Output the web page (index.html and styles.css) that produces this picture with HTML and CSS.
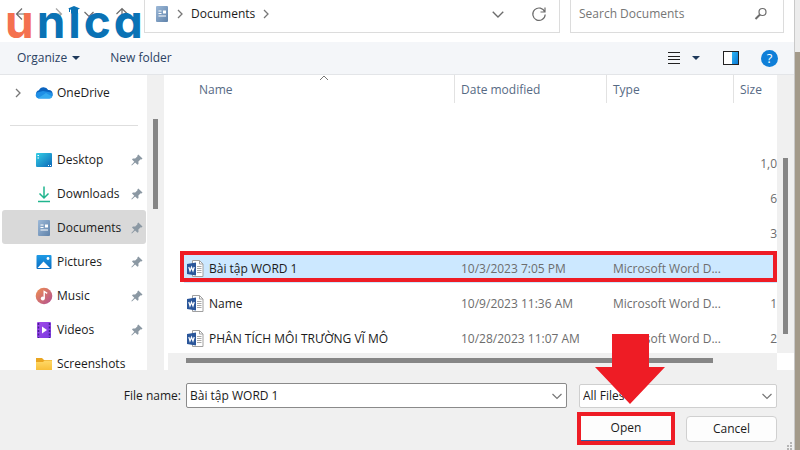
FILE: index.html
```html
<!DOCTYPE html>
<html lang="vi">
<head>
<meta charset="utf-8">
<title>Open</title>
<link rel="stylesheet" href="styles.css">
</head>
<body>

<!-- shared icons -->
<svg class="defs" width="0" height="0" aria-hidden="true">
	<defs>
		<linearGradient id="gDoc" x1="0" y1="0" x2="1" y2="1"><stop offset="0" stop-color="#9db9d8"/><stop offset="1" stop-color="#5f82aa"/></linearGradient>
		<linearGradient id="gDesk" x1="0" y1="0" x2="1" y2="1"><stop offset="0" stop-color="#35cfe6"/><stop offset="1" stop-color="#0b67b8"/></linearGradient>
		<linearGradient id="gPic" x1="0" y1="0" x2="0" y2="1"><stop offset="0" stop-color="#1f9be6"/><stop offset="1" stop-color="#0a6cc0"/></linearGradient>
		<linearGradient id="gMusic" x1="0" y1="0" x2="1" y2="1"><stop offset="0" stop-color="#f0904f"/><stop offset="1" stop-color="#b14f93"/></linearGradient>
		<linearGradient id="gVid" x1="0" y1="0" x2="1" y2="1"><stop offset="0" stop-color="#a24be8"/><stop offset="1" stop-color="#7a3be0"/></linearGradient>
		<linearGradient id="gFold" x1="0" y1="0" x2="0" y2="1"><stop offset="0" stop-color="#ffd968"/><stop offset="1" stop-color="#f7bd35"/></linearGradient>
		<linearGradient id="gPane" x1="0" y1="0" x2="1" y2="1"><stop offset="0" stop-color="#2fb4f2"/><stop offset="1" stop-color="#0a78d4"/></linearGradient>
		<symbol id="doc" viewBox="0 0 14 18">
			<rect x="1" y="1" width="12" height="16" rx="1" fill="url(#gDoc)"/>
			<path d="M3.500 6h3M3.500 8.500h3M8 7h3M3.500 11h7.500" stroke="#fff" stroke-width="1.200"/>
			<path d="M8 5.500h3v3H8z" fill="#fff"/>
		</symbol>
		<symbol id="pin" viewBox="0 0 12 12">
			<path d="M7.300 .6l4.200 4-1 .8-.8-.1-2.300 2.300.1 2.300-1 .9-2.400-2.400L.9 11.600l-.6-.5 3-3.300L1 5.500l.9-1 2.300.1 2.300-2.300-.1-.9z" fill="#8b98a3"/>
		</symbol>
		<symbol id="word" viewBox="0 0 17 18">
			<path d="M5.500 .5h7l3.500 3.500v12.500H5.500z" fill="#fff" stroke="#a0a0a0"/>
			<path d="M12.500 .5V4H16" fill="none" stroke="#a0a0a0"/>
			<path d="M10 6.500h4.500M10 8.500h4.500M10 10.500h4.500M10 12.500h4.500" stroke="#a8a8a8"/>
			<path d="M0 4l9-1.500v13L0 14z" fill="#2a569a"/>
			<path d="M1.800 7l1.200 4 1.500-3.800L6 11l1.200-4" fill="none" stroke="#fff" stroke-width="1.200"/>
		</symbol>
		<symbol id="down" viewBox="0 0 12 12"><path d="M1.500 4L6 8.500 10.500 4" fill="none" stroke="currentColor" stroke-width="1.200"/></symbol>
		<symbol id="right" viewBox="0 0 12 12"><path d="M4 2l4 4-4 4" fill="none" stroke="currentColor" stroke-width="1.300"/></symbol>
	</defs>
</svg>

<div class="window">
	<header class="nav">
		<div class="history">
			<button type="button" aria-label="Back"><svg width="14" height="14" viewBox="0 0 14 14"><path d="M13 7H2M7 1.500L1.500 7 7 12.500"/></svg></button>
			<button type="button" class="faded" aria-label="Forward"><svg width="14" height="14" viewBox="0 0 14 14"><path d="M1 7h11M7 1.500L12.500 7 7 12.500"/></svg></button>
			<button type="button" aria-label="Recent"><svg width="12" height="12"><use href="#down"/></svg></button>
			<button type="button" aria-label="Up"><svg width="14" height="14" viewBox="0 0 14 14"><path d="M7 14V2M1.500 7L7 1.500 12.500 7"/></svg></button>
			<div class="logo" aria-label="unica">
				<span class="u">u</span><span>n</span><span class="i">ı<svg width="12" height="8" viewBox="0 0 12 8"><path d="M6 0l6 2.500-2 1v4H3V3.800l-1-.4v2.600H1V2.700L0 2.500z" fill="#0a72b5"/></svg></span><span>c</span><span>a</span>
			</div>
		</div>
		<div class="address">
			<svg width="14" height="18"><use href="#doc"/></svg>
			<svg class="sep" width="12" height="12"><use href="#right"/></svg>
			<a href="#">Documents</a>
			<svg class="sep" width="12" height="12"><use href="#right"/></svg>
			<button type="button" class="push" aria-label="Previous locations"><svg width="14" height="14"><use href="#down"/></svg></button>
			<button type="button" aria-label="Refresh"><svg width="16" height="16" viewBox="0 0 16 16"><path d="M13.800 6A6.200 6.200 0 1 0 14.200 8.500M14 1.500V6H9.500"/></svg></button>
		</div>
		<div class="search">
			<input type="text" placeholder="Search Documents" aria-label="Search Documents">
			<svg width="14" height="14" viewBox="0 0 14 14"><circle cx="8.500" cy="5" r="3.500"/><path d="M6 7.500L1.500 12" stroke-width="2"/></svg>
		</div>
	</header>

	<div class="toolbar">
		<button type="button">Organize <i class="caret"></i></button>
		<button type="button">New folder</button>
		<div class="views">
			<button type="button" aria-label="View"><svg width="14" height="14" viewBox="0 0 14 14"><path d="M1 1.500h12M1 5.500h12M1 8.500h12M1 12.500h12" stroke="#222"/></svg></button>
			<button type="button" aria-label="More views"><i class="caret"></i></button>
			<button type="button" aria-label="Preview pane"><svg width="16" height="14" viewBox="0 0 16 14"><rect x=".5" y=".5" width="15" height="13" fill="#fff" stroke="#222"/><rect x="9" y="1" width="6" height="12" fill="url(#gPane)"/></svg></button>
			<button type="button" class="help" aria-label="Help">?</button>
		</div>
	</div>

	<div class="main">
		<nav class="side">
			<a href="#" class="drive"><svg class="sep" width="12" height="12"><use href="#right"/></svg>
				<svg width="18" height="18" viewBox="0 0 18 18"><path d="M4.500 14a4 4 0 0 1-.6-7.800A5.200 5.200 0 0 1 13.200 6 4 4 0 0 1 14 14z" fill="#0a63bf"/><path d="M3.500 14.500A3.400 3.400 0 0 1 2 8.500L8 7l8.500 1.500A3.500 3.500 0 0 1 14.500 14.500z" fill="#1f8fe6"/><path d="M3 14.300L11 9l6 3.500a3 3 0 0 1-2.500 2H4z" fill="#35aaf0"/></svg>
				<span>OneDrive</span></a>
			<hr>
			<a href="#"><svg width="18" height="18" viewBox="0 0 18 18"><rect x="1" y="2" width="16" height="14" rx="1" fill="url(#gDesk)"/><path d="M2.500 4.500H4M2.500 7H4" stroke="#fff" stroke-width="1.200"/><path d="M13 14.500h3" stroke="#fff" stroke-dasharray="1 1"/></svg><span>Desktop</span><svg class="pin" width="12" height="12"><use href="#pin"/></svg></a>
			<a href="#"><svg width="18" height="18" viewBox="0 0 18 18"><path d="M9 1.500v11M4.500 8.500L9 13l4.500-4.500" fill="none" stroke="#20b58e" stroke-width="1.500"/><path d="M3 16.500h12" stroke="#20b58e" stroke-width="1.500"/></svg><span>Downloads</span><svg class="pin" width="12" height="12"><use href="#pin"/></svg></a>
			<a href="#" class="current"><svg width="18" height="18"><use href="#doc"/></svg><span>Documents</span><svg class="pin" width="12" height="12"><use href="#pin"/></svg></a>
			<a href="#"><svg width="18" height="18" viewBox="0 0 18 18"><rect x="1.500" y="2" width="15" height="14" rx="1" fill="url(#gPic)"/><path d="M2.500 15l6-6.500 6.500 6.500z" fill="#fff"/><circle cx="13" cy="5.500" r="1.400" fill="#fff"/></svg><span>Pictures</span><svg class="pin" width="12" height="12"><use href="#pin"/></svg></a>
			<a href="#"><svg width="18" height="18" viewBox="0 0 18 18"><circle cx="9" cy="9" r="8.300" fill="url(#gMusic)"/><circle cx="7.800" cy="11.500" r="2" fill="#fff"/><path d="M9.200 11.500V4.500l3 1.800" fill="none" stroke="#fff" stroke-width="1.400"/></svg><span>Music</span><svg class="pin" width="12" height="12"><use href="#pin"/></svg></a>
			<a href="#"><svg width="18" height="18" viewBox="0 0 18 18"><rect x="2" y="1" width="14" height="16" rx="1" fill="url(#gVid)"/><path d="M3.500 2v15M14.500 2v15" stroke="#44208f" stroke-width="1.500" stroke-dasharray="2 1.500"/><path d="M7 5.500l5 3.500-5 3.500z" fill="#fff"/></svg><span>Videos</span><svg class="pin" width="12" height="12"><use href="#pin"/></svg></a>
			<a href="#"><svg width="18" height="18" viewBox="0 0 18 18"><path d="M1 3h6l2 2h8v11H1z" fill="#e9a520"/><path d="M1 7h7l1.500-1.500H17V16H1z" fill="url(#gFold)"/></svg><span>Screenshots</span></a>
		</nav>
		<div class="vbar side-bar"><i></i></div>

		<div class="list">
			<svg class="sort" width="10" height="6" viewBox="0 0 10 6"><path d="M1 5l4-4 4 4" fill="none" stroke="#777"/></svg>
			<table>
				<thead>
					<tr><th>Name</th><th>Date modified</th><th>Type</th><th>Size</th></tr>
				</thead>
				<tbody>
					<tr><td></td><td></td><td></td><td>1,0</td></tr>
					<tr><td></td><td></td><td></td><td>6</td></tr>
					<tr><td></td><td></td><td></td><td>3</td></tr>
					<tr class="selected"><td><svg width="17" height="18"><use href="#word"/></svg>Bài tập WORD 1</td><td>10/3/2023 7:05 PM</td><td>Microsoft Word D...</td><td></td></tr>
					<tr><td><svg width="17" height="18"><use href="#word"/></svg>Name</td><td>10/9/2023 11:36 AM</td><td>Microsoft Word D...</td><td>1</td></tr>
					<tr><td><svg width="17" height="18"><use href="#word"/></svg>PHÂN TÍCH MÔI TRƯỜNG VĨ MÔ</td><td>10/28/2023 11:07 AM</td><td>Microsoft Word D...</td><td>2</td></tr>
				</tbody>
			</table>
			<div class="hbar"><i></i></div>
		</div>
		<div class="vbar list-bar"><i></i></div>
	</div>

	<form class="bottom">
		<label for="fname">File name:</label>
		<div class="combo">
			<input type="text" id="fname" value="Bài tập WORD 1">
			<svg width="12" height="12"><use href="#down"/></svg>
		</div>
		<div class="filter">
			<select aria-label="File type"><option>All Files</option></select>
			<svg width="12" height="12"><use href="#down"/></svg>
		</div>
		<div class="actions">
			<div class="mark">
				<button type="button" class="open">Open</button>
				<svg class="arrow" width="70" height="70" viewBox="0 0 70 70"><path d="M17 0h37v33h16L35 70 0 33h17z" fill="#ee1c25"/></svg>
			</div>
			<button type="button" class="cancel">Cancel</button>
		</div>
		<svg class="grip" width="8" height="8" viewBox="0 0 8 8"><path d="M5 0h2v2H5zM5 3h2v2H5zM5 6h2v2H5zM2 3h2v2H2zM2 6h2v2H2z" fill="#b5b5b5"/></svg>
	</form>
</div>
<div class="edge"></div>

</body>
</html>
```
FILE: styles.css
```css
* { margin: 0; padding: 0; box-sizing: border-box; }
body { display: flex; height: 100vh; overflow: hidden; background: #fff; color: #1b1b1b; font: 12px/18px "Open Sans", "Noto Sans", sans-serif; }
a { color: inherit; text-decoration: none; }
button, input, select { font: inherit; color: inherit; border: none; background: none; outline: none; }
svg { flex: none; }
.defs { position: absolute; }
.sep { color: #777; }

.window { flex: 1; min-width: 0; display: flex; flex-direction: column; }
.edge { width: 6px; border-left: 1px solid #c9c9c9; background: linear-gradient(#ececec 52px, #a39a8a 52px); }

/* address row */
.nav { display: flex; height: 42px; padding-right: 10px; }
.nav button svg, .search svg { display: block; fill: none; stroke: #6c6c6c; stroke-width: 1.2; }
.nav button { color: #6c6c6c; }
.history { position: relative; width: 144px; height: 28px; display: flex; align-items: center; justify-content: space-between; padding: 0 15px; }
.history .faded { opacity: .6; }
.logo { position: absolute; left: 5px; top: -2px; display: flex; gap: 3px; color: #0a72b5; font: 700 46px/46px Inter, sans-serif; font-feature-settings: "cv11"; }
.logo .u { color: #f4714f; }
.logo .i { position: relative; }
.logo .i svg { position: absolute; left: 0; top: 8px; }
.address { flex: 1; display: flex; align-items: center; height: 33px; padding: 0 12px 4px 10px; border: 1px solid #dcdcdc; border-top: none; }
.address .sep { margin: 0 5px; }
.address .push { margin: 0 26px 0 auto; }
.search { display: flex; align-items: center; width: 214px; height: 33px; margin-left: 10px; padding: 0 15px 4px 8px; border: 1px solid #dcdcdc; border-top: none; }
.search input { flex: 1; min-width: 0; }
.search input::placeholder { color: #767676; opacity: 1; }

/* command row */
.toolbar { display: flex; align-items: center; gap: 30px; height: 33px; padding: 0 16px 0 17px; background: #f4f6f9; border-bottom: 1px solid #e3e5e8; color: #2b4263; }
.toolbar svg { display: block; }
.caret { display: inline-block; margin-left: 2px; vertical-align: 2px; border: 4px solid transparent; border-top-color: #1e395b; border-bottom: none; }
.views { display: flex; align-items: center; margin-left: auto; }
.views button:nth-child(2) { margin: 0 23px 0 9px; }
.views .help { width: 17px; height: 17px; margin-left: 22px; border-radius: 50%; background: #0f7fd8; color: #fff; font-size: 13px; line-height: 17px; }

.main { display: flex; flex: 1; min-height: 0; overflow: hidden; }

/* folders */
.side { width: 147px; padding: 0 1px 0 2px; overflow: hidden; }
.side a { display: flex; align-items: center; gap: 4px; height: 34px; padding: 2px 3px 0 33px; }
.side .drive { padding-left: 10px; }
.side .drive .sep { margin-right: 7px; }
.side .pin { margin-left: auto; }
.side hr { height: 1px; margin: 16px 8px; border: none; background: #dedede; }
.side .current { background: #d9d9d9; border-radius: 3px; }

.vbar { width: 17px; background: #f0f0f0; }
.vbar i { display: block; width: 5px; background: #868686; }
.side-bar i { height: 90px; margin: 44px 0 0 6px; }
.list-bar { border-bottom: 17px solid #fff; }
.list-bar i { height: 176px; margin: 83px 0 0 6px; }

/* files */
.list { position: relative; flex: 1; min-width: 0; display: flex; flex-direction: column; overflow: hidden; }
.sort { position: absolute; left: 155px; top: 0; }
table { display: block; flex: 1; min-height: 0; overflow: hidden; }
thead, tbody { display: block; }
tr { display: grid; grid-template-columns: 1fr 152px 127px 44px; align-items: center; height: 31px; margin: 0 0 4px 20px; }
thead tr { height: 28px; margin-bottom: 44px; }
th { height: 28px; padding: 6px 0 0 6px; border-left: 1px solid #e2e2e2; color: #566a84; font-weight: 400; text-align: left; }
th:first-child { padding-left: 15px; border: none; }
td { padding: 2px 0 0 7px; color: #6d6d6d; white-space: nowrap; }
td:first-child { display: flex; align-items: center; gap: 5px; padding-left: 3px; color: #1b1b1b; }
td:last-child { text-align: right; }
.selected { position: relative; background: #cce8ff; }
.selected::after { content: ""; position: absolute; inset: -1px 0 1px -4px; border: 4px solid #ee1c25; }
.hbar { height: 17px; margin-left: 4px; padding: 5px 64px 0 18px; background: #f0f0f0; }
.hbar i { display: block; height: 5px; background: #868686; }

/* file name and buttons */
.bottom { position: relative; display: grid; grid-template-columns: 181px 1fr 198px; gap: 4px 5px; align-items: center; align-content: start; height: 80px; padding: 13px 17px 0 0; background: #f0f0f0; }
.bottom label { text-align: right; }
.combo, .filter { display: flex; align-items: center; height: 25px; padding: 0 3px; border: 1px solid #8a8a8a; border-radius: 2px; background: #fff; }
.combo svg, .filter svg { color: #777; }
.combo { margin-right: 7px; }
.combo input { flex: 1; min-width: 0; }
.filter { height: 24px; border-color: #cfcfcf; }
.filter select { flex: 1; appearance: none; }
.actions { grid-column: 1 / -1; display: flex; justify-content: flex-end; align-items: center; gap: 11px; }
.mark { position: relative; display: flex; width: 98px; height: 33px; border: 4px solid #ee1c25; }
.open { flex: 1; background: #fdfdfd; border-bottom: 1px solid #2a62a8; }
.cancel { width: 91px; height: 26px; background: #fdfdfd; border: 1px solid #d0d0d0; border-radius: 4px; }
.arrow { position: absolute; left: 14px; bottom: 37px; }
.grip { position: absolute; right: 1px; bottom: 0; }
```
